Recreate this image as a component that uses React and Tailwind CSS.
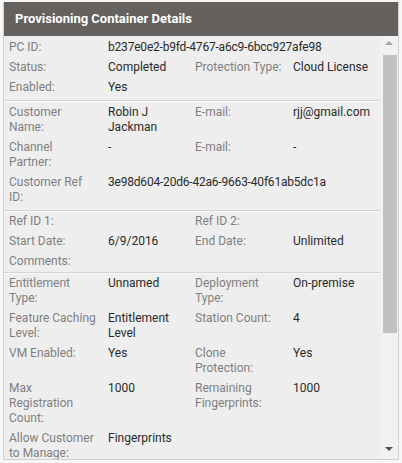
import React from 'react';

const sections = [
  {
    pad: 'pt-[4px] pb-[5px]',
    rows: [
      { label: 'PC ID:', value: 'b237e0e2-b9fd-4767-a6c9-6bcc927afe98', wide: true },
      { label: 'Status:', value: 'Completed', label2: 'Protection Type:', value2: 'Cloud License' },
      { label: 'Enabled:', value: 'Yes' },
    ],
  },
  {
    pad: 'pt-[4px] pb-[5px]',
    rows: [
      { label: 'Customer\nName:', value: 'Robin J\nJackman', label2: 'E-mail:', value2: 'rjj@gmail.com' },
      { label: 'Channel\nPartner:', value: '-', label2: 'E-mail:', value2: '-' },
      { label: 'Customer Ref\nID:', value: '3e98d604-20d6-42a6-9663-40f61ab5dc1a', wide: true },
    ],
  },
  {
    pad: 'pt-[3px] pb-[3px]',
    rows: [
      { label: 'Ref ID 1:', value: '', label2: 'Ref ID 2:', value2: '' },
      { label: 'Start Date:', value: '6/9/2016', label2: 'End Date:', value2: 'Unlimited' },
      { label: 'Comments:', value: '' },
    ],
  },
  {
    pad: 'pt-[3px] pb-[5px]',
    rows: [
      { label: 'Entitlement\nType:', value: 'Unnamed', label2: 'Deployment\nType:', value2: 'On-premise' },
      { label: 'Feature Caching\nLevel:', value: 'Entitlement\nLevel', label2: 'Station Count:', value2: '4' },
      { label: 'VM Enabled:', value: 'Yes', label2: 'Clone\nProtection:', value2: 'Yes' },
      { label: 'Max\nRegistration\nCount:', value: '1000', label2: 'Remaining\nFingerprints:', value2: '1000' },
      { label: 'Allow Customer\nto Manage:', value: 'Fingerprints' },
    ],
  },
];

function Row({ row }) {
  return (
    <div className="grid grid-cols-[99px_87px_98px_1fr] whitespace-pre-line">
      <div className="text-[#7f7f7f]">{row.label}</div>
      {row.wide ? (
        <div className="col-span-3 text-[#2a2a2a] tracking-[-0.2px]">{row.value}</div>
      ) : (
        <>
          <div className="text-[#2a2a2a]">{row.value}</div>
          <div className="text-[#7f7f7f]">{row.label2}</div>
          <div className="text-[#2a2a2a]">{row.value2}</div>
        </>
      )}
    </div>
  );
}

export default function App() {
  return (
    <div className="w-[402px] h-[463px] bg-[#f7f7f7] pt-[2px] pl-[3px]">
      <div className="w-[396px] h-[458px] flex flex-col border-x border-b border-[#cfcfcf] bg-[#eeeeee]">
        <div className="h-[34px] shrink-0 bg-[#64615e] flex items-center pl-[11px] font-['Roboto',sans-serif] font-bold text-[13px] text-white">
          Provisioning Container Details
        </div>
        <div className="flex flex-1 min-h-0">
          <div className="flex-1 overflow-hidden font-['Roboto',sans-serif] text-[12px] leading-[15px]">
            {sections.map((s, i) => (
              <div
                key={i}
                className={`pl-[5px] flex flex-col gap-[5px] ${s.pad} ${i < sections.length - 1 ? 'border-b border-[#d4d4d4] shadow-[0_1px_0_#f9f9f9]' : ''}`}
              >
                {s.rows.map((r, j) => (
                  <Row key={j} row={r} />
                ))}
              </div>
            ))}
          </div>
          {/* scrollbar */}
          <div className="w-[18px] shrink-0 bg-[#f1f1f1] flex flex-col items-center pt-[5px] pb-[8px]">
            <div className="w-0 h-0 border-x-[4px] border-x-transparent border-b-[4px] border-b-[#a6a6a6] mb-[10px]" />
            <div className="w-[14px] h-[278px] bg-[#c1c1c1] ml-[2px]" />
            <div className="flex-1" />
            <div className="w-0 h-0 border-x-[4px] border-x-transparent border-t-[4px] border-t-[#505050]" />
          </div>
        </div>
      </div>
    </div>
  );
}
